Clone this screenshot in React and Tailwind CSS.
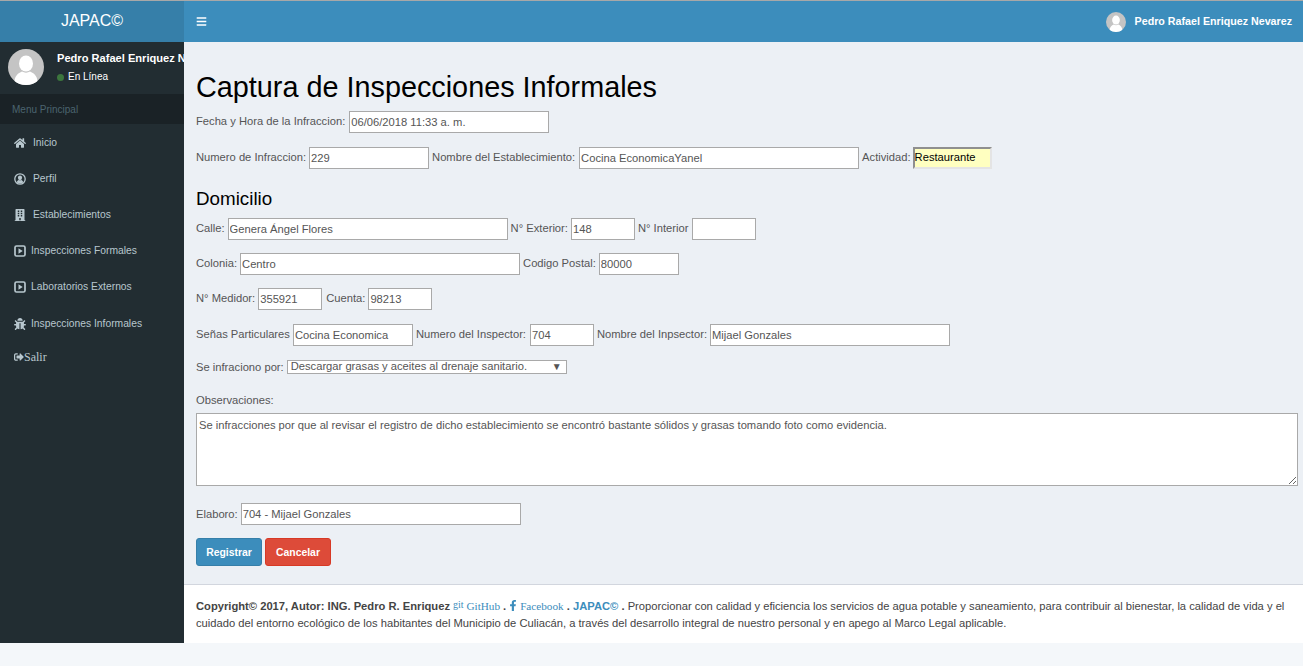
import { FaBars, FaHome, FaBuilding, FaBug, FaSignOutAlt, FaFacebookF } from 'react-icons/fa';

function PerfilIcon({ className }) {
  return (
    <svg viewBox="0 0 12 12" className={className} fill="currentColor">
      <circle cx="6" cy="6" r="5.200" fill="none" stroke="currentColor" strokeWidth="1.300" />
      <ellipse cx="6" cy="4.800" rx="2.100" ry="2.400" />
      <path d="M2.700 9.200c.3-1.400 1.200-2 2.100-2.300.7.400 1.700.4 2.400 0 .9.300 1.800.9 2.100 2.300-.9.800-2 1.300-3.300 1.300s-2.400-.5-3.300-1.300z" />
    </svg>
  );
}

function PlayIcon({ className }) {
  return (
    <svg viewBox="0 0 12 12" className={className} fill="currentColor">
      <rect x="1" y="1" width="10" height="10" rx="1.500" fill="none" stroke="currentColor" strokeWidth="1.700" />
      <polygon points="4.500,3.300 8.700,6 4.500,8.700" />
    </svg>
  );
}

const MENU = [
  { icon: FaHome, label: 'Inicio', gap: 'ml-[7px]' },
  { icon: PerfilIcon, label: 'Perfil', gap: 'ml-[7px]' },
  { icon: FaBuilding, label: 'Establecimientos', gap: 'ml-[7px]' },
  { icon: PlayIcon, label: 'Inspecciones Formales', gap: 'ml-[5px]' },
  { icon: PlayIcon, label: 'Laboratorios Externos', gap: 'ml-[5px]' },
  { icon: FaBug, label: 'Inspecciones Informales', gap: 'ml-[5px]', row: 'h-[37px] pt-[1px]' },
];

function Avatar({ className }) {
  return (
    <svg viewBox="0 0 36 36" className={className}>
      <circle cx="18" cy="18" r="18" fill="#c4c4c4" />
      <ellipse cx="18" cy="14.5" rx="7" ry="8" fill="#fff" />
      <path d="M6.500 32c.5-5 3.500-8 7.500-9.500 2.500 1.500 5.500 1.500 8 0 4 1.500 7 4.500 7.500 9.500-3 2.500-7 4-11.500 4S9.500 34.500 6.500 32z" fill="#fff" />
    </svg>
  );
}

function Field({ label, value, width, className = '', gap = 'ml-[3px]' }) {
  return (
    <>
      <label className={className}>{label}</label>
      <input
        readOnly
        defaultValue={value}
        className={`${width} h-[22px] ${gap} bg-white border border-[#a9a9a9] px-[1px] text-[#555] outline-none`}
      />
    </>
  );
}

function Sidebar() {
  return (
    <aside className="w-[184px] shrink-0 bg-[#222d32] overflow-hidden">
      <div className="h-[41px] bg-[#367fa9] flex items-center justify-center text-white text-[16px] leading-none pb-[2px]">
        JAPAC©
      </div>
      <div className="h-[52px] flex items-start pt-[7px] pl-2 whitespace-nowrap">
        <Avatar className="w-9 h-9 shrink-0" />
        <div className="ml-[13px] pt-[4px]">
          <p className="text-[11.100px] font-bold text-white leading-none">Pedro Rafael Enriquez Nevarez</p>
          <p className="text-[10px] text-white leading-none mt-[8px] flex items-center">
            <span className="w-[7px] h-[7px] rounded-full bg-[#3c763d] mr-[4px]" />
            En Línea
          </p>
        </div>
      </div>
      <div className="h-[30px] bg-[#1a2226] pl-3 flex items-center text-[10px] text-[#4b646f]">Menu Principal</div>
      <nav className="pt-[1px]">
        {MENU.map((m) => (
          <a key={m.label} className={`${m.row || 'h-9'} flex items-center pl-[14px] text-[10.300px] text-[#b8c7ce]`}>
            <m.icon className="w-3 h-3 shrink-0" />
            <span className={m.gap}>{m.label}</span>
          </a>
        ))}
        <a className="flex items-center pl-[14px] pt-[9px] text-[#b8c7ce] text-[12px] font-['Liberation_Serif',serif] leading-none">
          <FaSignOutAlt className="w-[10px] h-[10px]" />
          Salir
        </a>
      </nav>
    </aside>
  );
}

function Topbar() {
  return (
    <header className="h-[41px] bg-[#3c8dbc] flex items-center justify-between pl-3 pr-[11px] text-white">
      <FaBars className="w-[11px] h-[11px]" />
      <div className="flex items-center">
        <Avatar className="w-5 h-5 mr-[9px]" />
        <span className="text-[10.700px] font-bold">Pedro Rafael Enriquez Nevarez</span>
      </div>
    </header>
  );
}

function Form() {
  return (
    <section className="flex-1 bg-[#ecf0f5] pl-3 pr-[5px] text-[11.200px] text-[#555]">
      <h1 className="text-[28.800px] leading-none text-black mt-[31px]">Captura de Inspecciones Informales</h1>

      <div className="flex items-center mt-[9px]">
        <Field label="Fecha y Hora de la Infraccion:" value="06/06/2018 11:33 a. m." width="w-[200px]" gap="ml-1" />
      </div>

      <div className="flex items-center mt-[14px]">
        <Field label="Numero de Infraccion:" value="229" width="w-[120px]" />
        <Field label="Nombre del Establecimiento:" value="Cocina EconomicaYanel" width="w-[280px]" className="ml-[3px]" gap="ml-1" />
        <label className="ml-[3px]">Actividad:</label>
        <div className="ml-[2px] w-[79px] h-[22px] bg-[#ffffc0] border-2 border-t-[#8f8f8f] border-l-[#8f8f8f] border-r-[#e4e4e4] border-b-[#e4e4e4] text-black flex items-center">
          Restaurante
        </div>
      </div>

      <h2 className="text-[18.800px] leading-none text-black mt-[21px]">Domicilio</h2>

      <div className="flex items-center mt-[9px]">
        <Field label="Calle:" value="Genera Ángel Flores" width="w-[280px]" />
        <Field label="N° Exterior:" value="148" width="w-[64px]" className="ml-[3px]" />
        <Field label="N° Interior" value="" width="w-[64px]" className="ml-[3px]" gap="ml-1" />
      </div>

      <div className="flex items-center mt-[13px]">
        <Field label="Colonia:" value="Centro" width="w-[280px]" />
        <Field label="Codigo Postal:" value="80000" width="w-[80px]" className="ml-[3px]" />
      </div>

      <div className="flex items-center mt-[13px]">
        <Field label="N° Medidor:" value="355921" width="w-[64px]" />
        <Field label="Cuenta:" value="98213" width="w-[64px]" className="ml-1" />
      </div>

      <div className="flex items-center mt-[14px]">
        <Field label="Señas Particulares" value="Cocina Economica" width="w-[120px]" />
        <Field label="Numero del Inspector:" value="704" width="w-[64px]" className="ml-[3px]" gap="ml-1" />
        <Field label="Nombre del Inpsector:" value="Mijael Gonzales" width="w-[240px]" className="ml-[3px]" />
      </div>

      <div className="flex items-center mt-[13px]">
        <label>Se infraciono por:</label>
        <div className="relative ml-[3px] w-[280px] h-[14px] flex">
          <select className="appearance-none w-full h-full bg-white border border-[#a9a9a9] pl-[3px] text-[#555] leading-none outline-none">
            <option>Descargar grasas y aceites al drenaje sanitario.</option>
          </select>
          <span className="absolute right-[5px] top-[1px] text-[10px] leading-[12px] text-[#555]">▼</span>
        </div>
      </div>

      <p className="mt-[19px] leading-[13px]">Observaciones:</p>
      <textarea
        readOnly
        defaultValue="Se infracciones por que al revisar el registro de dicho establecimiento se encontró bastante sólidos y grasas tomando foto como evidencia."
        className="block w-full h-[73px] mt-[6px] bg-white border border-[#a9a9a9] px-[2px] py-[3px] text-[#555] outline-none"
      />

      <div className="flex items-center mt-[17px]">
        <Field label="Elaboro:" value="704 - Mijael Gonzales" width="w-[280px]" />
      </div>

      <div className="flex mt-[13px] mb-[18px] font-bold text-[10.400px] text-white">
        <button className="w-[66px] h-[28px] rounded-[3px] bg-[#3c8dbc] border border-[#367fa9]">Registrar</button>
        <button className="w-[66px] h-[28px] ml-[3px] rounded-[3px] bg-[#dd4b39] border border-[#d73925]">Cancelar</button>
      </div>
    </section>
  );
}

function Footer() {
  const serif = "font-['Liberation_Serif',serif] font-normal text-[11.200px] text-[#3c8dbc]";
  return (
    <footer className="h-[59px] bg-white border-t border-[#d2d6de] pl-3 pr-[14px] pt-[11px] text-[11.200px] leading-[17px] text-[#444]">
      <b>Copyright© 2017, Autor: ING. Pedro R. Enriquez </b>
      <a className={serif}><span className="text-[10px] align-[2px]">git</span> GitHub</a>
      <b> . </b>
      <a className={serif}><FaFacebookF className="inline w-[8px] h-[11px] align-[-1px]" /> Facebook</a>
      <b> . </b>
      <b className="text-[#3c8dbc]">JAPAC©</b>
      <b> . </b>
      Proporcionar con calidad y eficiencia los servicios de agua potable y saneamiento, para contribuir al bienestar, la calidad de vida y el cuidado del entorno ecológico de los habitantes del Municipio de Culiacán, a través del desarrollo integral de nuestro personal y en apego al Marco Legal aplicable.
    </footer>
  );
}

export default function App() {
  return (
    <div className="min-h-screen bg-[#f4f7fa] font-['Liberation_Sans',sans-serif]">
      <div className="h-[1px] bg-[#a8a8a8]" />
      <div className="flex">
        <Sidebar />
        <main className="flex-1 min-w-0 flex flex-col">
          <Topbar />
          <Form />
          <Footer />
        </main>
      </div>
    </div>
  );
}
